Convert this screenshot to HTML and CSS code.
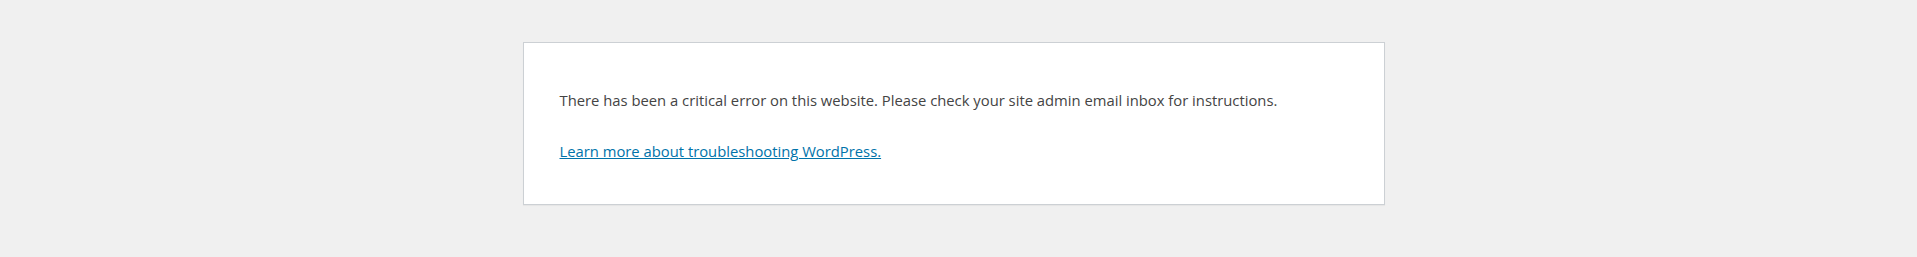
FILE: index.html
```html
<!DOCTYPE html>
<html lang="en">
<head>
  <meta charset="UTF-8">
  <meta name="viewport" content="width=device-width">
  <title>WordPress &rsaquo; Error</title>
  <link rel="stylesheet" href="styles.css">
</head>
<body id="error-page">
  <div class="wp-die-message">
    <p>There has been a critical error on this website. Please check your site admin email inbox for instructions.</p>
    <p><a href="#">Learn more about troubleshooting WordPress.</a></p>
  </div>
</body>
</html>
```

FILE: styles.css
```css
html {
  background: #f0f0f0;
  padding-right: 10px;
}

body {
  background: #fff;
  border: 1px solid #ccd0d4;
  color: #444;
  font-family: "Open Sans", "Noto Sans", sans-serif;
  box-sizing: border-box;
  width: 862px;
  margin: 42px auto 0;
  padding: 18px 36px;
  box-shadow: 0 1px 1px rgba(0, 0, 0, .04);
}

#error-page p {
  font-size: 14.8px;
  line-height: 24px;
  margin: 27px 0 23px;
}

a {
  color: #0073aa;
}
```
